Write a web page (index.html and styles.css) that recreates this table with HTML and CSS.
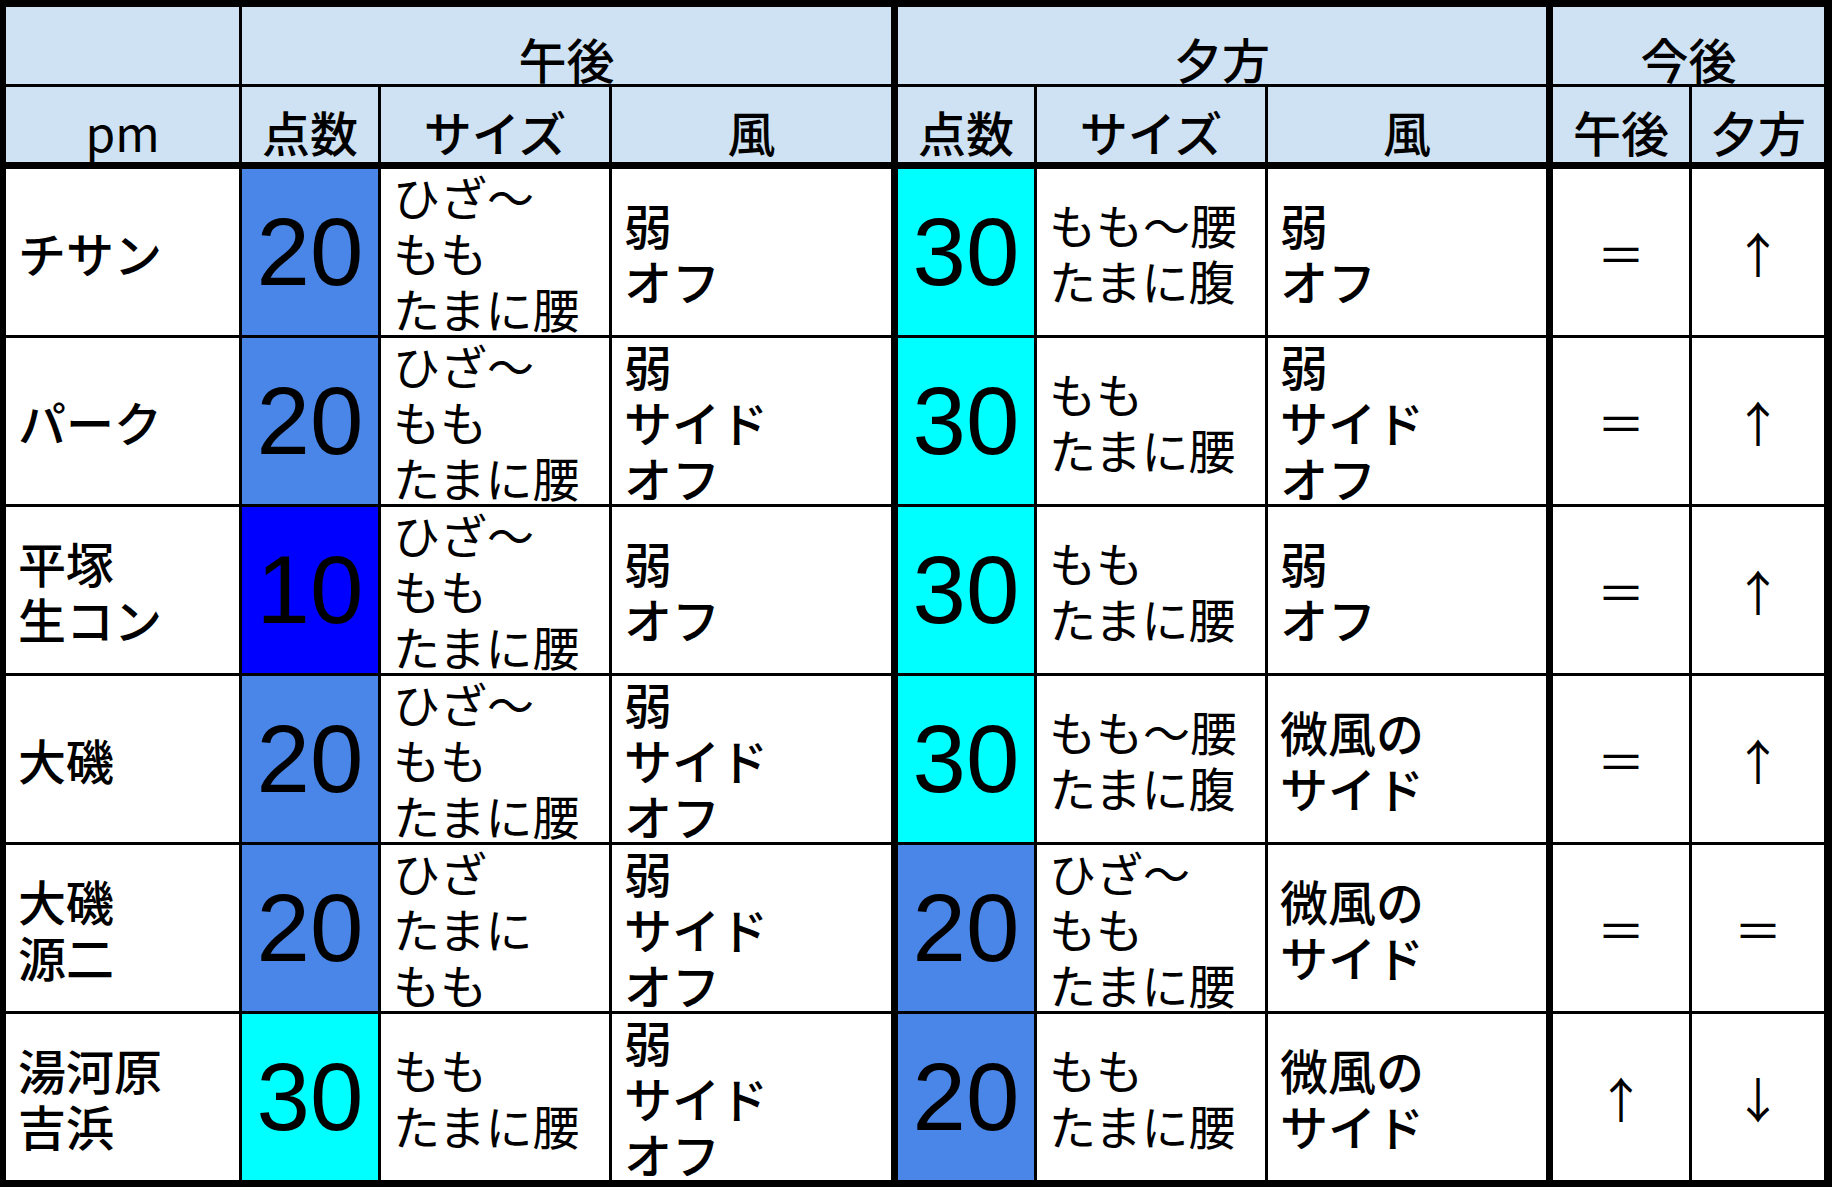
FILE: index.html
```html
<!DOCTYPE html>
<html lang="ja">
<head>
<meta charset="utf-8">
<title>波情報</title>
<link rel="stylesheet" href="styles.css">
</head>
<body>
<div class="sheet">
  <!-- header row 1 -->
  <div class="c hd h1"></div>
  <div class="c hd h1 span3 thick">午後</div>
  <div class="c hd h1 span3 thick">夕方</div>
  <div class="c hd h1 span2 last">今後</div>
  <!-- header row 2 -->
  <div class="c hd h2 pm">pm</div>
  <div class="c hd h2">点数</div>
  <div class="c hd h2">サイズ</div>
  <div class="c hd h2 thick">風</div>
  <div class="c hd h2">点数</div>
  <div class="c hd h2">サイズ</div>
  <div class="c hd h2 thick">風</div>
  <div class="c hd h2">午後</div>
  <div class="c hd h2 last">夕方</div>

  <!-- row 1 -->
  <div class="c name">チサン</div>
  <div class="c score s20">20</div>
  <div class="c size">ひざ～<br>もも<br>たまに腰</div>
  <div class="c wind thick">弱<br>オフ</div>
  <div class="c score s30">30</div>
  <div class="c size">もも～腰<br>たまに腹</div>
  <div class="c wind thick">弱<br>オフ</div>
  <div class="c trend">＝</div>
  <div class="c trend last">↑</div>

  <!-- row 2 -->
  <div class="c name">パーク</div>
  <div class="c score s20">20</div>
  <div class="c size">ひざ～<br>もも<br>たまに腰</div>
  <div class="c wind thick">弱<br>サイド<br>オフ</div>
  <div class="c score s30">30</div>
  <div class="c size">もも<br>たまに腰</div>
  <div class="c wind thick">弱<br>サイド<br>オフ</div>
  <div class="c trend">＝</div>
  <div class="c trend last">↑</div>

  <!-- row 3 -->
  <div class="c name">平塚<br>生コン</div>
  <div class="c score s10">10</div>
  <div class="c size">ひざ～<br>もも<br>たまに腰</div>
  <div class="c wind thick">弱<br>オフ</div>
  <div class="c score s30">30</div>
  <div class="c size">もも<br>たまに腰</div>
  <div class="c wind thick">弱<br>オフ</div>
  <div class="c trend">＝</div>
  <div class="c trend last">↑</div>

  <!-- row 4 -->
  <div class="c name">大磯</div>
  <div class="c score s20">20</div>
  <div class="c size">ひざ～<br>もも<br>たまに腰</div>
  <div class="c wind thick">弱<br>サイド<br>オフ</div>
  <div class="c score s30">30</div>
  <div class="c size">もも～腰<br>たまに腹</div>
  <div class="c wind thick">微風の<br>サイド</div>
  <div class="c trend">＝</div>
  <div class="c trend last">↑</div>

  <!-- row 5 -->
  <div class="c name">大磯<br>源二</div>
  <div class="c score s20">20</div>
  <div class="c size">ひざ<br>たまに<br>もも</div>
  <div class="c wind thick">弱<br>サイド<br>オフ</div>
  <div class="c score s20">20</div>
  <div class="c size">ひざ～<br>もも<br>たまに腰</div>
  <div class="c wind thick">微風の<br>サイド</div>
  <div class="c trend">＝</div>
  <div class="c trend last">＝</div>

  <!-- row 6 -->
  <div class="c name lastrow">湯河原<br>吉浜</div>
  <div class="c score s30 lastrow">30</div>
  <div class="c size lastrow">もも<br>たまに腰</div>
  <div class="c wind thick lastrow">弱<br>サイド<br>オフ</div>
  <div class="c score s20 lastrow">20</div>
  <div class="c size lastrow">もも<br>たまに腰</div>
  <div class="c wind thick lastrow">微風の<br>サイド</div>
  <div class="c trend lastrow">↑</div>
  <div class="c trend last lastrow">↓</div>
</div>
</body>
</html>
```

FILE: styles.css
```css
html, body {
  margin: 0;
  padding: 0;
  background: #ffffff;
}

.sheet {
  display: grid;
  grid-template-columns: 236px 139px 231px 286px 139px 231px 285px 139px 132px;
  grid-template-rows: 80px 82px 169px 169px 169px 169px 169px 166px;
  width: 1818px;
  border-style: solid;
  border-color: #000;
  border-width: 7px 8px 7px 6px;
  font-family: "Noto Sans CJK JP", "Noto Sans", sans-serif;
  color: #000;
}

.c {
  box-sizing: border-box;
  border-right: 3px solid #000;
  border-bottom: 3px solid #000;
  background: #fff;
  display: flex;
  min-width: 0;
  min-height: 0;
}

.c.thick { border-right-width: 7px; }
.c.last { border-right-width: 0; }
.c.lastrow { border-bottom-width: 0; }

.span3 { grid-column: span 3; }
.span2 { grid-column: span 2; }

.hd {
  background: #cfe2f3;
  justify-content: center;
  align-items: flex-end;
  font-size: 48px;
  font-weight: 500;
  line-height: 1;
}

.h1 { padding-bottom: 2px; }
.h2 { padding-bottom: 7px; border-bottom-width: 7px; }
.pm { font-weight: 400; }

.name, .size, .wind {
  align-items: center;
  padding-left: 12px;
  line-height: 56px;
  white-space: nowrap;
}

.name { font-size: 48px; font-weight: 500; }
.wind { font-size: 48px; font-weight: 500; }
.size { font-size: 47px; font-weight: 400; }

.score {
  justify-content: center;
  align-items: center;
  font-family: "Liberation Sans", Arial, sans-serif;
  font-size: 96px;
  line-height: 1;
}

.s20 { background: #4a86e8; }
.s10 { background: #0000ff; }
.s30 { background: #00ffff; }

.trend {
  justify-content: center;
  align-items: center;
  font-size: 48px;
  line-height: 1;
}
```
